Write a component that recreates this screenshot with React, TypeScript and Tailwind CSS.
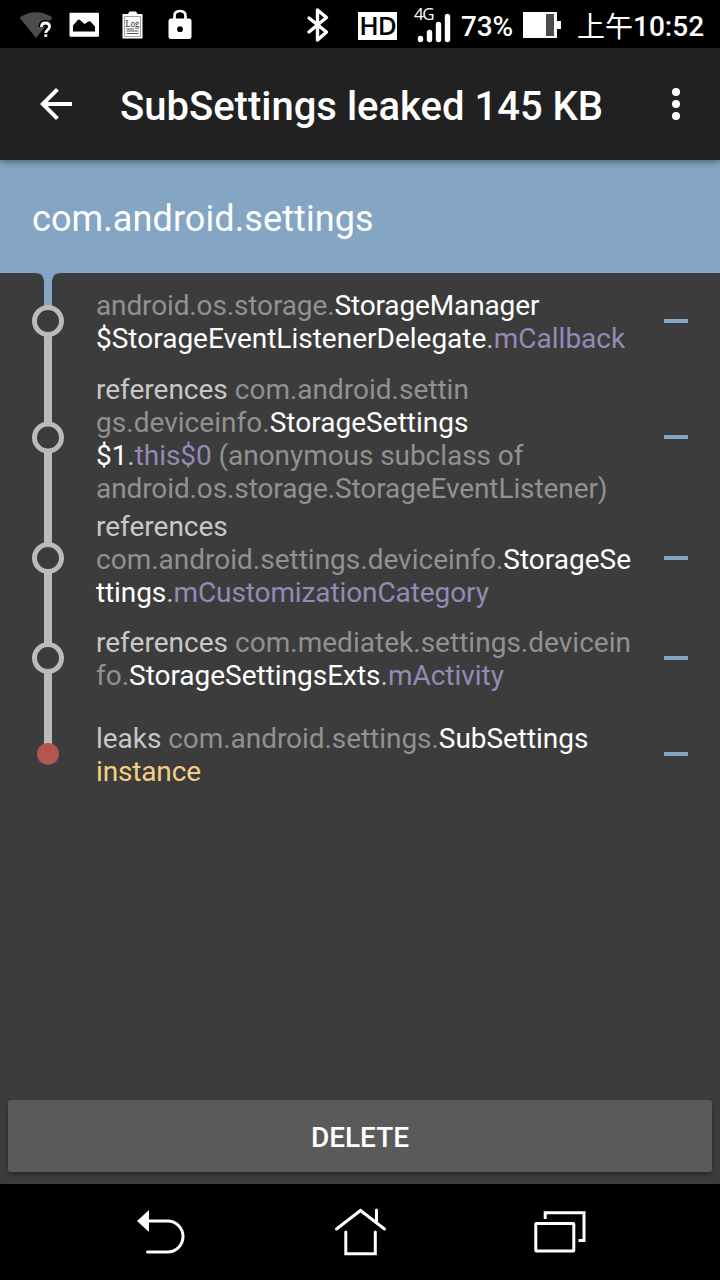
import React from "react";

type Tone = "pkg" | "cls" | "field" | "verb" | "note";

const TONES: Record<Tone, string> = {
  pkg: "text-[#919191]",
  cls: "text-white",
  field: "text-[#9589b6]",
  verb: "text-[#c8c8c8]",
  note: "text-[#f3cf83]",
};

interface Line {
  tracking?: string;
  parts: [Tone, string][];
}

interface Row {
  height: number;
  kind: "first" | "middle" | "last";
  lines: Line[];
}

const ROWS: Row[] = [
  {
    height: 96,
    kind: "first",
    lines: [
      { tracking: "tracking-[-0.13px]", parts: [["pkg", "android.os.storage."], ["cls", "StorageManager"]] },
      { parts: [["cls", "$StorageEventListenerDelegate"], ["verb", "."], ["field", "mCallback"]] },
    ],
  },
  {
    height: 137,
    kind: "middle",
    lines: [
      { parts: [["verb", "references "], ["pkg", "com.android.settin"]] },
      { tracking: "tracking-[0.03px]", parts: [["pkg", "gs.deviceinfo."], ["cls", "StorageSettings"]] },
      { tracking: "tracking-[-0.06px]", parts: [["cls", "$1"], ["verb", "."], ["field", "this$0"], ["pkg", " (anonymous subclass of"]] },
      { tracking: "tracking-[-0.1px]", parts: [["pkg", "android.os.storage.StorageEventListener)"]] },
    ],
  },
  {
    height: 104,
    kind: "middle",
    lines: [
      { parts: [["verb", "references"]] },
      { parts: [["pkg", "com.android.settings.deviceinfo."], ["cls", "StorageSe"]] },
      { tracking: "tracking-[-0.1px]", parts: [["cls", "ttings"], ["verb", "."], ["field", "mCustomizationCategory"]] },
    ],
  },
  {
    height: 96,
    kind: "middle",
    lines: [
      { tracking: "tracking-[0.02px]", parts: [["verb", "references "], ["pkg", "com.mediatek.settings.devicein"]] },
      { tracking: "tracking-[-0.02px]", parts: [["pkg", "fo."], ["cls", "StorageSettingsExts"], ["verb", "."], ["field", "mActivity"]] },
    ],
  },
  {
    height: 96,
    kind: "last",
    lines: [
      { tracking: "tracking-[-0.05px]", parts: [["verb", "leaks "], ["pkg", "com.android.settings."], ["cls", "SubSettings"]] },
      { tracking: "tracking-[-0.15px]", parts: [["note", "instance"]] },
    ],
  },
];

function Connector({ height, kind }: { height: number; kind: Row["kind"] }) {
  const mid = height / 2;
  return (
    <svg width="96" height={height} viewBox={`0 0 96 ${height}`} className="block">
      {kind === "first" ? (
        <path d={`M35 0Q44 0 44 9V${mid - 13}H52V9Q52 0 61 0Z`} fill="#84a6c4" />
      ) : (
        <rect x="44" y="0" width="8" height={mid} fill="#bbbbbb" />
      )}
      {kind !== "last" && <rect x="44" y={mid + 12} width="8" height={height - mid - 12} fill="#bbbbbb" />}
      {kind === "last" ? (
        <circle cx="48" cy={mid} r="11" fill="#b4564f" />
      ) : (
        <circle cx="48" cy={mid} r="13.5" fill="#3c3c3c" stroke="#bbbbbb" strokeWidth="5" />
      )}
    </svg>
  );
}

function StatusBar() {
  return (
    <div className="flex h-12 shrink-0 items-start bg-black text-white">
      <svg width="300" height="48" viewBox="0 0 300 48" className="block shrink-0">
        <path d="M19.5 17.5Q36 7 52.500 17.500L36 38Z" fill="#4c4c4c" />
        <path d="M41.500 27Q41.500 23 45.500 23Q49.500 23 49.500 26.500Q49.500 28.500 47.500 30Q45.700 31.300 45.700 33" fill="none" stroke="#000" strokeWidth="6" />
        <path d="M41.500 27Q41.500 23 45.500 23Q49.500 23 49.500 26.500Q49.500 28.500 47.500 30Q45.700 31.300 45.700 33" fill="none" stroke="#fff" strokeWidth="2.800" />
        <rect x="44.300" y="34.300" width="2.900" height="2.600" fill="#fff" />
        <rect x="69.500" y="12.800" width="29.500" height="24" rx="1" fill="#fff" />
        <path d="M73 31.500V25.500L78 19.800Q79 19 80 20L84.500 24L88.500 21.500Q89.500 20.800 90.500 21.500L95 26.500V31.500Z" fill="#000" />
        <path d="M122.500 14H128L129.500 11.500H136L137.500 14H142.500V38.500H122.500Z" fill="#fff" />
        <path d="M124.500 16.500H140.500V36.500H124.500Z" fill="none" stroke="#888" strokeWidth="0.800" />
        <path d="M126.500 29H134M126.500 31H138.500M126.500 33.500H138.500" stroke="#555" strokeWidth="1" />
        <text x="125.600" y="26.500" fontSize="9.500" fill="#111" fontFamily="Liberation Serif, serif" textLength="13.500" lengthAdjust="spacingAndGlyphs">Log</text>
        <rect x="168.500" y="18.500" width="23" height="20.500" rx="2.500" fill="#fff" />
        <path d="M174.500 20V16Q174.500 11 180 11Q185.500 11 185.500 16V20" fill="none" stroke="#fff" strokeWidth="2.700" />
        <circle cx="180" cy="29.200" r="2.900" fill="#000" />
      </svg>
      <svg width="58" height="48" viewBox="300 0 58 48" className="block shrink-0">
        <path d="M309 18L326.500 32L317.500 40V10L326.500 17.500L309 32" fill="none" stroke="#fff" strokeWidth="3.400" strokeLinecap="round" strokeLinejoin="round" />
      </svg>
      <div className="mt-3 flex h-7 w-[39px] shrink-0 items-center justify-center bg-white font-['Open_Sans',sans-serif] text-[26px] leading-[26px] font-semibold tracking-[-1px] text-black">
        <span className="-mt-0.5">HD</span>
      </div>
      <div className="relative h-12 w-[64px] shrink-0">
        <span className="absolute top-1 left-[17px] font-['Open_Sans',sans-serif] text-[17px] leading-5 tracking-[-1.4px]">4G</span>
        <svg width="64" height="48" viewBox="397 0 64 48" className="block">
          <path d="M420.500 38.500V39.500M429.500 32.500V39.500M438.500 24.500V39.500M447.500 16.500V39.500" stroke="#fff" strokeWidth="5.400" strokeLinecap="round" />
        </svg>
      </div>
      <span className="mt-[9px] w-[61px] shrink-0 text-[28px] leading-9 font-medium tracking-[-0.2px]">73%</span>
      <svg width="56" height="48" viewBox="522 0 56 48" className="block shrink-0">
        <path d="M523 12H557V21H561V29H557V38H523Z" fill="#fff" />
        <rect x="546" y="14" width="8" height="22" fill="#4c4c4c" />
      </svg>
      <span className="flex leading-9 whitespace-pre">
        <span className="mt-[7px] -ml-px w-14 font-['Noto_Sans_CJK_SC',sans-serif] text-[28px]">上午</span>
        <span className="mt-[9px] text-[28px] font-medium">10:52</span>
      </span>
    </div>
  );
}

export default function App() {
  return (
    <div className="flex h-[1280px] w-[720px] flex-col overflow-hidden bg-[#3c3c3c] font-['Roboto',sans-serif]">
      <StatusBar />
      <header className="relative flex h-28 shrink-0 items-center bg-[#212121] pr-5 pl-8 text-white shadow-[0_2px_7px_rgba(0,0,0,0.4)]">
        <svg width="48" height="48" viewBox="0 0 24 24" fill="currentColor" className="block">
          <path d="M20 11H7.830l5.590-5.590L12 4l-8 8 8 8 1.410-1.410L7.830 13H20v-2z" />
        </svg>
        <h1 className="ml-10 flex-1 pt-1.5 text-[40px] leading-[48px] font-medium whitespace-nowrap">SubSettings leaked 145 KB</h1>
        <svg width="48" height="48" viewBox="0 0 48 48" fill="currentColor" className="block">
          <circle cx="24" cy="12" r="4" />
          <circle cx="24" cy="24" r="4" />
          <circle cx="24" cy="36" r="4" />
        </svg>
      </header>
      <div className="flex h-[113px] shrink-0 items-center bg-[#84a6c4] px-8 pt-1 text-[36px] leading-[42px] tracking-[0.1px] text-white">com.android.settings</div>
      <main className="flex-1">
        {ROWS.map((row, i) => (
          <div key={i} className="grid grid-cols-[96px_1fr_56px]" style={{ height: row.height }}>
            <Connector height={row.height} kind={row.kind} />
            <div className="self-center pt-0.5 text-[28px] leading-[33px] whitespace-pre">
              {row.lines.map((line, j) => (
                <div key={j} className={line.tracking}>
                  {line.parts.map(([tone, text], k) => (
                    <span key={k} className={TONES[tone]}>{text}</span>
                  ))}
                </div>
              ))}
            </div>
            <div className="h-1 w-6 bg-[#84a6c4]" style={{ marginTop: Math.floor(row.height / 2) - 2 }} />
          </div>
        ))}
      </main>
      <button className="mx-2 mb-3 h-[72px] shrink-0 rounded-[3px] bg-[#5a5a5a] pt-1 text-[28px] leading-8 font-medium text-white shadow-[0_3px_5px_rgba(0,0,0,0.3)]">DELETE</button>
      <nav className="flex h-24 shrink-0 bg-black text-white">
        <svg width="240" height="96" viewBox="0 1184 240 96" fill="none" stroke="currentColor" strokeWidth="3" strokeLinecap="round" className="block">
          <path d="M148 1221H167.500A15.500 15.500 0 0 1 167.500 1252H147.500" />
          <path d="M137 1221L149 1210V1232Z" fill="currentColor" stroke="none" />
        </svg>
        <svg width="240" height="96" viewBox="240 1184 240 96" fill="none" stroke="currentColor" strokeWidth="3" strokeLinecap="round" className="block">
          <path d="M336.500 1229L360.500 1210.500L384.500 1229M376.500 1210V1222M345.800 1232V1253.800H375.300V1232" />
        </svg>
        <svg width="240" height="96" viewBox="480 1184 240 96" fill="none" stroke="currentColor" strokeWidth="3" className="block">
          <rect x="535.800" y="1223.500" width="38" height="27.500" rx="0.500" />
          <path d="M545.200 1219V1212.800H584V1240.500H578.500" />
        </svg>
      </nav>
    </div>
  );
}
